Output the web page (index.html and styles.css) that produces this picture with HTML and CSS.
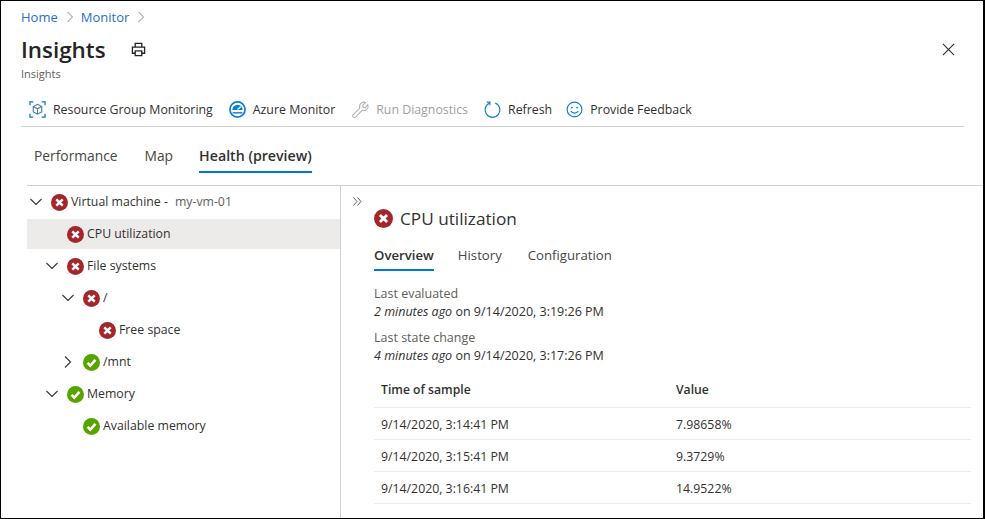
FILE: index.html
```html
<!DOCTYPE html>
<html lang="en">
<head>
  <meta charset="UTF-8">
  <title>Insights</title>
  <link rel="stylesheet" href="styles.css">
</head>
<body>
  <svg class="defs" width="0" height="0">
    <symbol id="err" viewBox="0 0 16 16">
      <circle cx="8" cy="8" r="8" fill="#a4262c"/>
      <path d="M5 5l6 6M11 5l-6 6" stroke="#fff" stroke-width="2.4" fill="none"/>
    </symbol>
    <symbol id="ok" viewBox="0 0 16 16">
      <circle cx="8" cy="8" r="8" fill="#57a300"/>
      <path d="M4.300 8.300l2.600 2.600 4.800-5.400" stroke="#fff" stroke-width="2.400" fill="none"/>
    </symbol>
    <symbol id="down" viewBox="0 0 12 12">
      <path d="M.5 3l5.500 5.500L11.500 3" stroke="#323130" stroke-width="1.100" fill="none"/>
    </symbol>
    <symbol id="right" viewBox="0 0 12 12">
      <path d="M3 .5L8.500 6 3 11.500" stroke="#323130" stroke-width="1.100" fill="none"/>
    </symbol>
  </svg>

  <div class="frame">
    <div class="top">
      <div class="crumbs">
        <a>Home</a>
        <svg class="crumb-sep" viewBox="0 0 8 12"><path d="M1.500 1l5 5-5 5" stroke="#8a8886" fill="none"/></svg>
        <a>Monitor</a>
        <svg class="crumb-sep" viewBox="0 0 8 12"><path d="M1.500 1l5 5-5 5" stroke="#8a8886" fill="none"/></svg>
      </div>

      <div class="title-row">
        <h1>Insights</h1>
        <svg class="print" viewBox="0 0 16 16">
          <path d="M4.500 5V1.500h7V5M4.500 12H1.500V5.500h13V12h-3M4.500 9.500h7v5h-7z" stroke="#252423" stroke-width="1.400" fill="none"/>
        </svg>
        <svg class="close" viewBox="0 0 14 14"><path d="M1 1l12 12M13 1L1 13" stroke="#323130" stroke-width="1.200"/></svg>
      </div>
      <div class="subtitle">Insights</div>

      <div class="toolbar">
        <div class="tool">
          <svg class="tool-icon" viewBox="0 0 18 18">
            <path d="M1 4.500V1h3.500M13.500 1H17v3.500M17 13.500V17h-3.500M4.500 17H1v-3.500" stroke="#0078d4" stroke-width="1.300" fill="none"/>
            <path d="M9 3.500l4.500 2.300v5.700L9 14l-4.500-2.500V5.800zM4.500 5.800L9 8.200l4.500-2.400M9 8.200V14" stroke="#4f7f9f" stroke-width="1.200" fill="none"/>
          </svg>
          Resource Group Monitoring
        </div>
        <div class="tool">
          <svg class="tool-icon" viewBox="0 0 18 18">
            <circle cx="9" cy="9" r="8" stroke="#0f7fd0" stroke-width="1.800" fill="#fff"/>
            <path d="M3.500 9.500a5.500 5.500 0 0 1 11 0z" fill="#0f7fd0"/>
            <path d="M9 9l3.500-3" stroke="#fff" stroke-width="1.300"/>
            <path d="M3.800 12.500h10.400" stroke="#0f7fd0" stroke-width="1.500"/>
          </svg>
          Azure Monitor
        </div>
        <div class="tool tool-off">
          <svg class="tool-icon" viewBox="0 0 18 18">
            <path d="M1.300 14.500l7-7a4.700 4.700 0 0 1 6-6l-2.800 2.800.4 2.300 2.300.4L16.700 4a4.700 4.700 0 0 1-6 6l-7 7a1.700 1.700 0 0 1-2.400-2.500z" stroke="#b3b0ad" stroke-width="1.100" fill="none"/>
          </svg>
          Run Diagnostics
        </div>
        <div class="tool">
          <svg class="tool-icon" viewBox="0 0 18 18">
            <path d="M11.800 2.200a7.800 7.800 0 1 1-5.600 0" stroke="#0f7fd0" stroke-width="1.200" fill="none"/>
            <path d="M6.300 .5v4M2.800 1.200h3.600" stroke="#0f7fd0" stroke-width="1.200" fill="none"/>
          </svg>
          Refresh
        </div>
        <div class="tool">
          <svg class="tool-icon" viewBox="0 0 18 18">
            <circle cx="9" cy="9" r="7.800" stroke="#0f7fd0" stroke-width="1.200" fill="none"/>
            <circle cx="6.300" cy="7" r="1" fill="#0f7fd0"/>
            <circle cx="11.700" cy="7" r="1" fill="#0f7fd0"/>
            <path d="M5 10.800c2 2.700 6 2.700 8 0" stroke="#0f7fd0" stroke-width="1.200" fill="none"/>
          </svg>
          Provide Feedback
        </div>
      </div>

      <div class="tabs">
        <div class="tab">Performance</div>
        <div class="tab">Map</div>
        <div class="tab tab-on">Health (preview)</div>
      </div>
    </div>

    <div class="split">
      <div class="tree">
        <div class="row lvl0">
          <svg class="twist"><use href="#down"/></svg>
          <svg class="status"><use href="#err"/></svg>
          <span>Virtual machine -</span><span class="vm-name">my-vm-01</span>
        </div>
        <div class="row lvl1 row-on">
          <svg class="status"><use href="#err"/></svg>
          <span>CPU utilization</span>
        </div>
        <div class="row lvl1">
          <svg class="twist"><use href="#down"/></svg>
          <svg class="status"><use href="#err"/></svg>
          <span>File systems</span>
        </div>
        <div class="row lvl2">
          <svg class="twist"><use href="#down"/></svg>
          <svg class="status"><use href="#err"/></svg>
          <span>/</span>
        </div>
        <div class="row lvl3">
          <svg class="status"><use href="#err"/></svg>
          <span>Free space</span>
        </div>
        <div class="row lvl2">
          <svg class="twist"><use href="#right"/></svg>
          <svg class="status"><use href="#ok"/></svg>
          <span>/mnt</span>
        </div>
        <div class="row lvl1">
          <svg class="twist"><use href="#down"/></svg>
          <svg class="status"><use href="#ok"/></svg>
          <span>Memory</span>
        </div>
        <div class="row lvl2">
          <svg class="status"><use href="#ok"/></svg>
          <span>Available memory</span>
        </div>
      </div>

      <div class="detail">
        <svg class="collapse" viewBox="0 0 9 9">
          <path d="M.5.500l3.500 4-3.500 4M4.500.500l3.500 4-3.500 4" stroke="#605e5c" fill="none"/>
        </svg>
        <div class="detail-title">
          <svg class="status-big"><use href="#err"/></svg>
          <h2>CPU utilization</h2>
        </div>
        <div class="subtabs">
          <div class="subtab subtab-on">Overview</div>
          <div class="subtab">History</div>
          <div class="subtab">Configuration</div>
        </div>
        <div class="fact">
          <div class="fact-label">Last evaluated</div>
          <div><em>2 minutes ago</em> on 9/14/2020, 3:19:26 PM</div>
        </div>
        <div class="fact">
          <div class="fact-label">Last state change</div>
          <div><em>4 minutes ago</em> on 9/14/2020, 3:17:26 PM</div>
        </div>
        <div class="samples">
          <div class="sample sample-head"><span>Time of sample</span><span>Value</span></div>
          <div class="sample"><span>9/14/2020, 3:14:41 PM</span><span>7.98658%</span></div>
          <div class="sample"><span>9/14/2020, 3:15:41 PM</span><span>9.3729%</span></div>
          <div class="sample"><span>9/14/2020, 3:16:41 PM</span><span>14.9522%</span></div>
        </div>
      </div>
    </div>
  </div>
</body>
</html>
```

FILE: styles.css
```css
html, body {
  margin: 0;
  height: 100%;
}

body {
  background-color: #ffffff;
  color: #323130;
  font-family: "Open Sans", "Noto Sans", sans-serif;
  font-size: 12px;
  overflow: hidden;
}

.defs {
  display: block;
  height: 0;
}

.frame {
  box-sizing: border-box;
  display: flex;
  flex-direction: column;
  width: 985px;
  height: 519px;
  border: 1px solid #000000;
  border-right-width: 2px;
}

.top {
  padding: 7px 19px 0 20px;
}

.crumbs {
  display: flex;
  align-items: center;
  height: 18px;
  font-size: 13px;
}

.crumbs a {
  color: #2a6fc4;
}

.crumb-sep {
  width: 8px;
  height: 12px;
  margin: 0 7px 0 8px;
}

.title-row {
  display: flex;
  align-items: center;
  height: 34px;
  margin-top: 6px;
}

h1 {
  margin: 0;
  font-size: 22.4px;
  font-weight: 600;
  color: #252423;
}

.print {
  width: 15px;
  height: 15px;
  margin: 1px 0 0 25px;
}

.close {
  width: 13px;
  height: 13px;
  margin-left: auto;
  margin-right: 9px;
}

.subtitle {
  height: 17px;
  line-height: 16px;
  font-size: 11px;
  color: #605e5c;
}

.toolbar {
  display: flex;
  align-items: center;
  gap: 16px;
  height: 34px;
  margin-top: 9px;
  padding-left: 8px;
  border-bottom: 1px solid #d2d0ce;
  font-size: 12.35px;
}

.tool {
  display: flex;
  align-items: center;
  gap: 8px;
}

.tool-icon {
  width: 17px;
  height: 17px;
  margin-right: -1px;
}

.tool-off {
  margin-left: 1px;
  color: #a19f9d;
}

.tool:last-child {
  margin-left: -2px;
}

.tabs {
  display: flex;
  gap: 27px;
  height: 45px;
  padding-left: 13px;
  font-size: 13.8px;
}

.tab {
  box-sizing: border-box;
  height: 46px;
  padding-top: 17px;
  line-height: 24px;
  color: #484644;
}

.tab-on {
  margin-left: -1px;
  font-size: 14.2px;
  font-weight: 600;
  color: #323130;
  border-bottom: 2px solid #0078d4;
}

.split {
  display: flex;
  flex: 1;
  min-height: 0;
  margin-top: 13px;
  margin-left: 26px;
  border-top: 1px solid #d2d0ce;
}

.tree {
  box-sizing: border-box;
  width: 314px;
  border-right: 1px solid #d2d0ce;
}

.row {
  display: flex;
  align-items: center;
  height: 30px;
  margin-bottom: 2px;
  font-size: 12.3px;
}

.row span {
  margin-top: -2px;
}

.row:first-child {
  margin-top: 1px;
}

.row-on {
  background-color: #edebe9;
}

.lvl0 { padding-left: 3px; }
.lvl1 { padding-left: 19px; }
.lvl2 { padding-left: 35px; }

.row-on {
  padding-left: 40px;
}

.lvl3 {
  padding-left: 72px;
}

.lvl2:last-child {
  padding-left: 56px;
}

.twist {
  width: 12px;
  height: 12px;
  margin-right: 9px;
  flex: none;
}

.status {
  width: 17px;
  height: 17px;
  margin: 0 3.5px 0 -0.5px;
  flex: none;
}

.vm-name {
  margin-left: 7px;
  color: #605e5c;
}

.detail {
  position: relative;
  flex: 1;
  padding: 0 12px 0 33px;
}

.collapse {
  position: absolute;
  left: 12px;
  top: 11px;
  width: 9px;
  height: 9px;
}

.detail-title {
  display: flex;
  align-items: center;
  gap: 7.5px;
  height: 28px;
  margin-top: 18px;
}

.status-big {
  width: 19px;
  height: 19px;
  margin-left: -0.5px;
}

h2 {
  margin: 0;
  font-size: 17.2px;
  font-weight: 400;
}

.subtabs {
  display: flex;
  gap: 24px;
  height: 30px;
  margin-top: 9px;
  margin-bottom: 14px;
  font-size: 13.2px;
}

.subtab {
  box-sizing: border-box;
  height: 30px;
  line-height: 28px;
  color: #484644;
}

.subtab + .subtab + .subtab {
  margin-left: 2px;
}

.subtab-on {
  font-weight: 600;
  color: #323130;
  border-bottom: 2px solid #0078d4;
}

.fact {
  line-height: 18px;
  font-size: 12.5px;
  margin-bottom: 8px;
}

.fact-label {
  color: #605e5c;
}

.samples {
  margin-top: -1px;
}

.sample {
  display: grid;
  grid-template-columns: 295px 1fr;
  align-items: center;
  height: 30px;
  padding: 1px 0 0 7px;
  border-bottom: 1px solid #edebe9;
  font-size: 12.3px;
}

.sample-head {
  height: 35px;
  padding-top: 0;
  font-size: 12.2px;
  font-weight: 600;
}
```
